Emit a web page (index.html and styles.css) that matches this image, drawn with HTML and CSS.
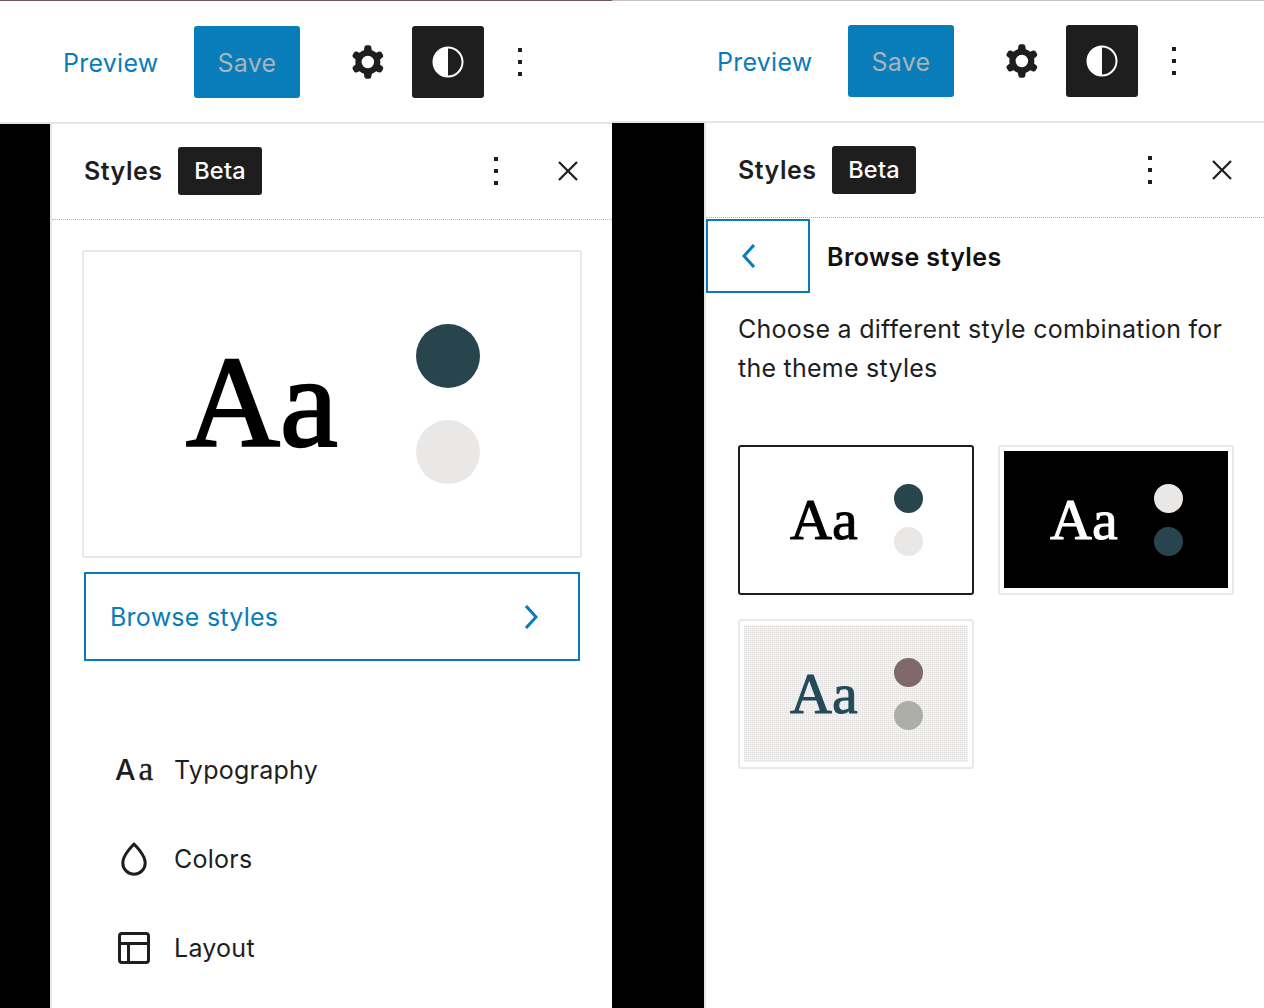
FILE: index.html
```html
<!DOCTYPE html>
<html>

<head>
  <title>Styles sidebar</title>
  <link rel="stylesheet" href="styles.css">
</head>

<body>
  <div class="screens">

    <!-- global styles panel -->
    <div class="screen screen-left">
      <div class="toolbar">
        <a class="preview">Preview</a>
        <button class="save">Save</button>
        <span class="icon gear">
          <svg viewBox="0 0 24 24"><path fill-rule="evenodd" d="M10.289 4.836A1 1 0 0111.275 4h1.306a1 1 0 01.987.836l.244 1.466c.787.26 1.503.679 2.108 1.218l1.393-.522a1 1 0 011.216.437l.653 1.13a1 1 0 01-.23 1.273l-1.148.944a6.025 6.025 0 010 2.435l1.149.946a1 1 0 01.23 1.272l-.653 1.13a1 1 0 01-1.216.437l-1.394-.522c-.605.54-1.32.958-2.108 1.218l-.244 1.466a1 1 0 01-.987.836h-1.306a1 1 0 01-.986-.836l-.244-1.466a5.995 5.995 0 01-2.108-1.218l-1.394.522a1 1 0 01-1.217-.436l-.653-1.131a1 1 0 01.23-1.272l1.149-.946a6.026 6.026 0 010-2.435l-1.148-.944a1 1 0 01-.23-1.272l.653-1.131a1 1 0 011.217-.437l1.393.522a5.994 5.994 0 012.108-1.218l.244-1.466zM14.929 12a3 3 0 11-6 0 3 3 0 016 0z"/></svg>
        </span>
        <span class="contrast">
          <svg viewBox="0 0 32 32"><circle cx="16" cy="16" r="14.5" fill="none" stroke="#fff" stroke-width="2"/><path fill="#fff" d="M16 1.5a14.5 14.5 0 000 29z"/></svg>
        </span>
        <span class="icon kebab">
          <svg viewBox="0 0 24 24"><path d="M13 19h-2v-2h2v2zm0-6h-2v-2h2v2zm0-6h-2V5h2v2z"/></svg>
        </span>
      </div>

      <div class="sidebar">
        <div class="sidebar-header">
          <span class="sidebar-title">Styles</span>
          <span class="beta">Beta</span>
          <span class="icon header-kebab">
            <svg viewBox="0 0 24 24"><path d="M13 19h-2v-2h2v2zm0-6h-2v-2h2v2zm0-6h-2V5h2v2z"/></svg>
          </span>
          <span class="icon close">
            <svg viewBox="0 0 24 24"><path d="M13.06 12l5.47-5.47-1.06-1.06L12 10.94 6.53 5.47 5.47 6.53 10.94 12l-5.47 5.47 1.06 1.06L12 13.06l5.47 5.47 1.06-1.06z"/></svg>
          </span>
        </div>

        <div class="panel">
          <div class="big-card">
            <span class="big-aa">Aa</span>
            <div class="big-dots">
              <span class="dot dot-teal"></span>
              <span class="dot dot-light"></span>
            </div>
          </div>

          <div class="browse">
            <span>Browse styles</span>
            <svg class="blue-icon" viewBox="0 0 24 24"><path d="M10.6 6L9.4 7l4.6 5-4.6 5 1.2 1 5.4-6z"/></svg>
          </div>

          <div class="menu">
            <div class="menu-item">
              <span class="aa-icon"><b>A</b><i>a</i></span>
              <span>Typography</span>
            </div>
            <div class="menu-item">
              <span class="icon menu-icon">
                <svg viewBox="0 0 24 24"><path fill="none" stroke="#1e1e1e" stroke-width="1.5" d="M12 4.6C12 4.6 6.4 9.8 6.4 14a5.6 5.6 0 0011.2 0C17.6 9.8 12 4.6 12 4.6z"/></svg>
              </span>
              <span>Colors</span>
            </div>
            <div class="menu-item">
              <span class="icon menu-icon">
                <svg viewBox="0 0 24 24"><path fill-rule="evenodd" d="M18 5.5H6a.5.5 0 00-.5.5v3h13V6a.5.5 0 00-.5-.5zm.5 5H10v8h8a.5.5 0 00.5-.5v-7.5zm-10 0h-3V18a.5.5 0 00.5.5h2.5v-8zM6 4h12a2 2 0 012 2v12a2 2 0 01-2 2H6a2 2 0 01-2-2V6a2 2 0 012-2z"/></svg>
              </span>
              <span>Layout</span>
            </div>
          </div>
        </div>
      </div>
    </div>

    <!-- browse styles panel -->
    <div class="screen screen-right">
      <div class="toolbar">
        <a class="preview">Preview</a>
        <button class="save">Save</button>
        <span class="icon gear">
          <svg viewBox="0 0 24 24"><path fill-rule="evenodd" d="M10.289 4.836A1 1 0 0111.275 4h1.306a1 1 0 01.987.836l.244 1.466c.787.26 1.503.679 2.108 1.218l1.393-.522a1 1 0 011.216.437l.653 1.13a1 1 0 01-.23 1.273l-1.148.944a6.025 6.025 0 010 2.435l1.149.946a1 1 0 01.23 1.272l-.653 1.13a1 1 0 01-1.216.437l-1.394-.522c-.605.54-1.32.958-2.108 1.218l-.244 1.466a1 1 0 01-.987.836h-1.306a1 1 0 01-.986-.836l-.244-1.466a5.995 5.995 0 01-2.108-1.218l-1.394.522a1 1 0 01-1.217-.436l-.653-1.131a1 1 0 01.23-1.272l1.149-.946a6.026 6.026 0 010-2.435l-1.148-.944a1 1 0 01-.23-1.272l.653-1.131a1 1 0 011.217-.437l1.393.522a5.994 5.994 0 012.108-1.218l.244-1.466zM14.929 12a3 3 0 11-6 0 3 3 0 016 0z"/></svg>
        </span>
        <span class="contrast">
          <svg viewBox="0 0 32 32"><circle cx="16" cy="16" r="14.5" fill="none" stroke="#fff" stroke-width="2"/><path fill="#fff" d="M16 1.5a14.5 14.5 0 000 29z"/></svg>
        </span>
        <span class="icon kebab">
          <svg viewBox="0 0 24 24"><path d="M13 19h-2v-2h2v2zm0-6h-2v-2h2v2zm0-6h-2V5h2v2z"/></svg>
        </span>
      </div>

      <div class="sidebar">
        <div class="sidebar-header">
          <span class="sidebar-title">Styles</span>
          <span class="beta">Beta</span>
          <span class="icon header-kebab">
            <svg viewBox="0 0 24 24"><path d="M13 19h-2v-2h2v2zm0-6h-2v-2h2v2zm0-6h-2V5h2v2z"/></svg>
          </span>
          <span class="icon close">
            <svg viewBox="0 0 24 24"><path d="M13.06 12l5.47-5.47-1.06-1.06L12 10.94 6.53 5.47 5.47 6.53 10.94 12l-5.47 5.47 1.06 1.06L12 13.06l5.47 5.47 1.06-1.06z"/></svg>
          </span>
        </div>

        <div class="browse-head">
          <span class="back">
            <svg class="blue-icon" viewBox="0 0 24 24"><path d="M14.6 7l-1.2-1L8 12l5.4 6 1.2-1-4.6-5z"/></svg>
          </span>
          <span class="browse-title">Browse styles</span>
        </div>

        <p class="description">Choose a different style combination for the theme styles</p>

        <div class="variations">
          <div class="variation variation-active">
            <div class="variation-inner">
              <span class="small-aa">Aa</span>
              <div class="small-dots">
                <span class="small-dot dot-teal"></span>
                <span class="small-dot dot-light"></span>
              </div>
            </div>
          </div>
          <div class="variation">
            <div class="variation-inner inner-black">
              <span class="small-aa">Aa</span>
              <div class="small-dots">
                <span class="small-dot dot-light"></span>
                <span class="small-dot dot-teal"></span>
              </div>
            </div>
          </div>
          <div class="variation">
            <div class="variation-inner inner-grey">
              <span class="small-aa">Aa</span>
              <div class="small-dots">
                <span class="small-dot dot-mauve"></span>
                <span class="small-dot dot-sage"></span>
              </div>
            </div>
          </div>
        </div>
      </div>
    </div>

  </div>
</body>

</html>
```

FILE: styles.css
```css
body {
  margin: 0;
  background-color: #fff;
  color: #1e1e1e;
  font-family: Inter, "Liberation Sans", sans-serif;
  font-size: 25px;
  letter-spacing: 0.25px;
  overflow: hidden;
}

svg {
  display: block;
  width: 100%;
  height: 100%;
  fill: #1e1e1e;
}

.screens {
  display: flex;
  height: 1008px;
  overflow: hidden;
}

.screen {
  display: flex;
  flex-direction: column;
  background-color: #000;
  box-sizing: border-box;
}

.screen-left {
  width: 612px;
  padding-left: 50px;
}

.screen-right {
  width: 652px;
  padding-left: 92px;
}

/* top bar */
.toolbar {
  display: flex;
  align-items: center;
  flex: none;
  background-color: #fff;
  border-top: 1px solid #6b5a5e;
  border-bottom: 2px solid #e6e6e6;
}

.screen-left .toolbar {
  margin-left: -50px;
  padding-left: 63px;
  height: 121px;
}

.screen-right .toolbar {
  margin-left: -92px;
  padding-left: 105px;
  height: 120px;
  border-top-color: #c9bfc2;
}

.preview {
  width: 131px;
  padding-top: 2px;
  color: #0a7cba;
}

.save {
  width: 106px;
  height: 72px;
  border: 0;
  border-radius: 3px;
  padding: 2px 0 0 0;
  background-color: #087dba;
  color: #a9b4b8;
  font-family: inherit;
  font-size: 25px;
  letter-spacing: 0.25px;
}

.icon {
  display: block;
  width: 48px;
  height: 48px;
  flex: none;
}

.gear {
  width: 50px;
  height: 50px;
  margin-left: 43px;
  margin-right: -1px;
}

.contrast {
  display: flex;
  align-items: center;
  justify-content: center;
  width: 72px;
  height: 72px;
  margin-left: 20px;
  border-radius: 3px;
  background-color: #1e1e1e;
}

.contrast svg {
  width: 32px;
  height: 32px;
}

.kebab {
  margin-left: 12px;
}

/* sidebar */
.sidebar {
  flex: 1;
  background-color: #fff;
  border-left: 2px solid #e6e6e6;
}

.sidebar-header {
  display: flex;
  align-items: center;
  height: 94px;
  border-bottom: 1px dotted #b5b5b5;
}

.screen-left .sidebar-header {
  padding: 0 20px 1px 32px;
}

.screen-right .sidebar-header {
  padding: 0 18px 0 32px;
}

.sidebar-title {
  width: 78px;
  font-weight: 600;
  letter-spacing: 0.5px;
}

.beta {
  margin-left: 16px;
  width: 84px;
  height: 48px;
  line-height: 48px;
  text-align: center;
  border-radius: 3px;
  background-color: #1e1e1e;
  color: #fff;
  font-size: 23.5px;
  font-weight: 500;
}

.header-kebab {
  margin-left: auto;
}

.close {
  margin-left: 24px;
  padding: 6px;
  box-sizing: border-box;
}

.panel {
  padding: 30px 30px 0 30px;
}

.big-card {
  display: flex;
  align-items: center;
  height: 304px;
  border: 2px solid #e8e8e8;
  border-radius: 2px;
  padding-left: 102px;
}

.big-aa {
  width: 230px;
  padding-bottom: 4px;
  font-family: "Liberation Serif", serif;
  font-size: 130px;
  line-height: 130px;
  letter-spacing: 0;
  color: #000;
  -webkit-text-stroke: 2.4px #000;
}

.big-dots {
  display: flex;
  flex-direction: column;
  gap: 32px;
}

.dot {
  display: block;
  width: 64px;
  height: 64px;
  border-radius: 50%;
}

.dot-teal {
  background-color: #28444d;
}

.dot-light {
  background-color: #e9e8e6;
}

.dot-mauve {
  background-color: #7f696b;
}

.dot-sage {
  background-color: #adaea8;
}

.browse {
  display: flex;
  align-items: center;
  justify-content: space-between;
  margin: 14px 2px 0 2px;
  height: 85px;
  padding: 0 24px 0 24px;
  border: 2px solid #0a7cba;
  color: #0a7cba;
}

.blue-icon {
  width: 48px;
  height: 48px;
  fill: #0a7cba;
}

.menu {
  margin-top: 64px;
}

.menu-item {
  display: flex;
  align-items: center;
  height: 89px;
  gap: 16px;
  padding-left: 28px;
}

.aa-icon {
  display: flex;
  align-items: baseline;
  justify-content: center;
  width: 48px;
  font-size: 29px;
  line-height: 1;
  letter-spacing: 0;
}

.aa-icon b {
  font-weight: 500;
}

.aa-icon i {
  margin-left: 3px;
  font-family: "Liberation Serif", serif;
  font-size: 33px;
  font-style: normal;
  -webkit-text-stroke: 0.4px #1e1e1e;
}

/* browse styles view */
.browse-head {
  display: flex;
  align-items: center;
  gap: 17px;
  margin-top: 1px;
}

.back {
  display: flex;
  align-items: center;
  justify-content: center;
  width: 100px;
  height: 70px;
  border: 2px solid #0a7cba;
}

.back .blue-icon {
  margin-left: -16px;
}

.browse-title {
  padding-top: 2px;
  font-weight: 600;
  letter-spacing: 0.4px;
  color: #111;
}

.description {
  margin: 17px 24px 0 32px;
  line-height: 39px;
}

.variations {
  display: grid;
  grid-template-columns: 236px 236px;
  gap: 24px;
  margin: 57px 0 0 32px;
}

.variation {
  height: 150px;
  box-sizing: border-box;
  padding: 4px 4px 5px 4px;
  border: 2px solid #e8e8e8;
  border-radius: 3px;
}

.variation-active {
  border-color: #1e1e1e;
}

.variation-inner {
  display: flex;
  align-items: center;
  height: 100%;
  padding-left: 46px;
  box-sizing: border-box;
  color: #000;
}

.inner-black {
  background-color: #000;
  color: #fff;
}

/* the grey preview is dithered in the reference */
.inner-grey {
  background-color: #e9e8e6;
  background-image: conic-gradient(#fbfbfa 25%, #e9e8e6 0);
  background-size: 2px 2px;
  color: #234a5a;
}

.small-aa {
  width: 104px;
  font-family: "Liberation Serif", serif;
  font-size: 58px;
  line-height: 58px;
  letter-spacing: 0;
  -webkit-text-stroke: 1px currentColor;
}

.small-dots {
  display: flex;
  flex-direction: column;
  gap: 14px;
}

.small-dot {
  display: block;
  width: 29px;
  height: 29px;
  border-radius: 50%;
}
```
